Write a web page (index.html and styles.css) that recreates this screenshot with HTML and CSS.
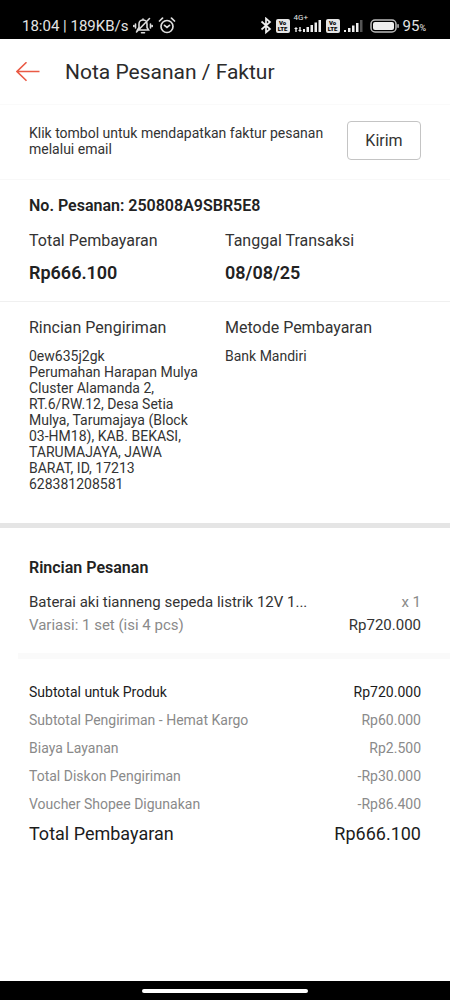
FILE: index.html
```html
<!DOCTYPE html>
<html lang="id">
<head>
<meta charset="utf-8">
<meta name="viewport" content="width=device-width, initial-scale=1">
<title>Nota Pesanan / Faktur</title>
<link rel="stylesheet" href="styles.css">
</head>
<body>
<div class="screen">
  <div class="status">
    <div class="status-group">
      <span>18:04 | 189KB/s</span>
      <svg class="bell" width="20" height="18" viewBox="0 0 20 18" fill="none" stroke="#ddd" stroke-width="1.600" stroke-linecap="round">
        <path d="M4.500 13h11l-1.500-2.500V7a4 4 0 0 0-8 0v3.500zM8.500 15.700h3M10 3V2M16.500 1.500 3.500 15M2.500 7v4M.8 8.500v1M17.500 7v4M19.200 8.500v1"/>
      </svg>
      <svg class="alarm" width="18" height="18" viewBox="0 0 18 18" fill="none" stroke="#ddd" stroke-width="1.700" stroke-linecap="round">
        <circle cx="9" cy="9.500" r="6"/><path d="M6.500 8.300 9 10.300l2.500-2M1.500 4l3-2.800M16.500 4l-3-2.800"/>
      </svg>
    </div>
    <div class="status-group">
      <svg width="12" height="18" viewBox="0 0 12 18" fill="none" stroke="#eee" stroke-width="1.700">
        <path d="M1.500 4.500 10 12l-4 3.500v-14L10 5l-8.500 7.500"/>
      </svg>
      <span class="volte"><span>Vo</span><span>LTE</span></span>
      <span class="network"><span>4G+</span>
        <svg width="28" height="14" viewBox="0 0 28 14" fill="#eee">
          <path d="M0 10l2-2 2 2H2.700v3H1.300v-3zM4 11h1.300V8h1.400v3H8l-2 2zM9 10h2v3H9zM12.500 8h2.500v5h-2.500zM16.500 6H19v7h-2.500zM20.500 3.500H23V13h-2.500zM24.500 1H27v12h-2.500z"/>
        </svg>
      </span>
      <span class="volte"><span>Vo</span><span>LTE</span></span>
      <svg width="20" height="14" viewBox="0 0 20 14" fill="#eee">
        <path d="M0 11h2v2H0zM4 9h2.500v4H4zM8 6.500h2.500V13H8zM12 4h2.500v9H12z"/><path fill="#555" d="M16 1h2.500v12H16z"/>
      </svg>
      <svg class="battery" width="29" height="14" viewBox="0 0 29 14">
        <rect x="1" y="1" width="25" height="12" rx="4" fill="none" stroke="#bbb" stroke-width="1.500"/>
        <rect x="3" y="3" width="21" height="8" rx="2" fill="#eee"/><rect x="27.300" y="5" width="1.500" height="4" rx=".7" fill="#bbb"/>
      </svg>
      <span class="charge">95<small class="percent">%</small></span>
    </div>
  </div>

  <header class="header">
    <button class="back" type="button" aria-label="Kembali">
      <svg width="24" height="20" viewBox="0 0 24 20" fill="none" stroke="#ea5a45" stroke-width="1.600">
        <path d="M23.500 9.500H1M10.500.3 1 9.500l9.500 9.200"/>
      </svg>
    </button>
    <h1 class="title">Nota Pesanan / Faktur</h1>
  </header>

  <main class="content">
    <section class="send">
      <p class="body-text send-text">Klik tombol untuk mendapatkan faktur pesanan melalui email</p>
      <button class="send-button" type="button">Kirim</button>
    </section>

    <section class="order">
      <h2 class="heading">No. Pesanan: 250808A9SBR5E8</h2>
      <div class="columns">
        <div><h3 class="label">Total Pembayaran</h3><p class="amount">Rp666.100</p></div>
        <div><h3 class="label">Tanggal Transaksi</h3><p class="amount">08/08/25</p></div>
      </div>
    </section>

    <section class="details columns">
      <div>
        <h3 class="label">Rincian Pengiriman</h3>
        <p class="body-text address">0ew635j2gk<br>Perumahan Harapan Mulya Cluster Alamanda 2, RT.6/RW.12, Desa Setia Mulya, Tarumajaya (Block 03-HM18), KAB. BEKASI, TARUMAJAYA, JAWA BARAT, ID, 17213<br>628381208581</p>
      </div>
      <div>
        <h3 class="label">Metode Pembayaran</h3>
        <p class="body-text">Bank Mandiri</p>
      </div>
    </section>

    <section class="items">
      <h2 class="heading">Rincian Pesanan</h2>
      <div class="item">
        <div class="row"><span>Baterai aki tianneng sepeda listrik 12V 1...</span><span class="muted">x 1</span></div>
        <div class="row"><span class="muted">Variasi: 1 set (isi 4 pcs)</span><span>Rp720.000</span></div>
      </div>
    </section>

    <table class="summary">
      <tbody>
        <tr class="subtotal"><th scope="row">Subtotal untuk Produk</th><td>Rp720.000</td></tr>
        <tr><th scope="row">Subtotal Pengiriman - Hemat Kargo</th><td>Rp60.000</td></tr>
        <tr><th scope="row">Biaya Layanan</th><td>Rp2.500</td></tr>
        <tr><th scope="row">Total Diskon Pengiriman</th><td>-Rp30.000</td></tr>
        <tr><th scope="row">Voucher Shopee Digunakan</th><td>-Rp86.400</td></tr>
        <tr class="total"><th scope="row">Total Pembayaran</th><td>Rp666.100</td></tr>
      </tbody>
    </table>
  </main>

  <div class="nav"><div class="nav-handle"></div></div>
</div>
</body>
</html>
```
FILE: styles.css
```css
* { box-sizing: border-box; }
body { margin: 0; background: #fff; color: #333; font-family: Roboto, "Liberation Sans", sans-serif; font-size: 15px; }
h1, h2, h3, p { margin: 0; font-weight: 400; }
button { font: inherit; color: inherit; background: none; padding: 0; cursor: pointer; }
svg { display: block; flex: none; }

.screen { min-height: 100vh; display: flex; flex-direction: column; }

.status { height: 39px; padding: 12px 24px 0 22px; display: flex; justify-content: space-between; background: #000; color: #e4e4e4; font-size: 15px; line-height: 20px; white-space: nowrap; }
.status-group { display: flex; align-items: center; gap: 4px; }
.bell { margin-left: 1px; }
.alarm { margin-left: 1px; }
.volte { display: flex; flex-direction: column; align-items: center; justify-content: center; width: 14px; height: 14px; border-radius: 2px; background: #e4e4e4; color: #000; font-size: 6px; font-weight: 900; line-height: 6px; }
.network { position: relative; }
.network > span { position: absolute; left: 0; top: -5px; font-size: 8px; line-height: 8px; }
.battery { margin-left: 2px; }
.charge { display: flex; align-items: baseline; }
.percent { font-size: 9px; line-height: 10px; }

.header { height: 66px; padding: 0 16px; display: flex; align-items: center; gap: 25px; border-bottom: 1px solid #fafafa; }
.back { border: 0; }
.title { font-size: 21px; line-height: 28px; color: #2b2b2b; }

.content { flex: 1; }
.body-text { font-size: 14px; line-height: 16px; }
.send { padding: 16px 29px 19px; display: flex; align-items: center; justify-content: space-between; gap: 16px; border-bottom: 1px solid #f8f8f8; }
.send-text { flex: 1; }
.send-button { width: 74px; height: 39px; border: 1px solid #c4c4c4; border-radius: 4px; font-size: 16px; }

.columns { display: grid; grid-template-columns: 1fr 1fr; }
.heading { font-size: 16px; line-height: 20px; font-weight: 600; color: #222; }
.label { font-size: 16px; line-height: 20px; }
.amount { margin-top: 10px; font-size: 18px; line-height: 24px; font-weight: 600; color: #222; }

.order { padding: 16px 29px; border-bottom: 1px solid #f0f0f0; }
.order .columns { margin-top: 15px; }
.details { padding: 16px 29px 31px; border-bottom: 5px solid #e5e5e5; }
.details .body-text { margin-top: 10px; }
.address { padding-right: 24px; }

.items { padding: 30px 29px 0; }
.item { margin-top: 14px; display: grid; gap: 3px; }
.row { display: flex; justify-content: space-between; line-height: 20px; }
.muted { color: #8a8a8a; }

.items::after { content: ""; display: block; height: 6px; margin: 18px -29px 0 -11px; background: #fafafa; }
.summary { width: 100%; padding: 19px 29px; border-collapse: separate; border-spacing: 0; color: #8a8a8a; font-size: 14px; line-height: 28px; }
.summary th, .summary td { padding: 0; font-weight: 400; text-align: left; }
.summary td { text-align: right; }
.summary .subtotal { color: #1c1c1c; }
.summary .total { color: #1c1c1c; font-size: 18px; line-height: 32px; }

.nav { height: 19px; display: flex; align-items: center; justify-content: center; background: #000; }
.nav-handle { width: 37%; height: 4px; border-radius: 2px; background: #fff; }
```
